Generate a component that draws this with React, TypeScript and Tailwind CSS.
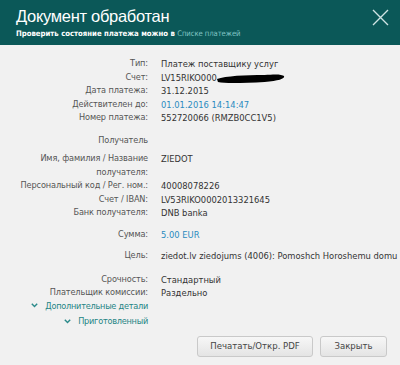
import React from "react";

const Row = ({ label, children, className = "" }: { label: React.ReactNode; children?: React.ReactNode; className?: string }) => (
  <div className={"flex whitespace-nowrap " + className}>
    <div className="w-[148px] shrink-0 text-right text-[#555] text-[9.1px] tracking-[-0.12px]">{label}</div>
    <div className="ml-[13px] text-[#333] text-[9.3px]">{children}</div>
  </div>
);

const Chevron = () => (
  <svg width="7" height="5" viewBox="0 0 7 5" className="inline-block mr-[7px] mb-[1px]">
    <path d="M0.8 0.8 L3.5 3.6 L6.2 0.8" stroke="#2a8a8a" strokeWidth="1.4" fill="none" />
  </svg>
);

export default function App() {
  return (
    <div className="w-[400px] h-[365px] bg-[#f1f1f1] overflow-hidden" style={{ fontFamily: '"DejaVu Sans Condensed", "Liberation Sans", sans-serif' }}>
      <div className="h-[45px] bg-[#0b5858] relative pl-[16px] pt-[5px]">
        <div className="text-white text-[16.5px] leading-[22px] tracking-[-0.3px]" style={{ fontFamily: '"Liberation Sans", sans-serif' }}>Документ обработан</div>
        <div className="text-white text-[7.7px] font-bold leading-[12px] mt-[1px]">
          Проверить состояние платежа можно в <span className="text-[#80c4c4] font-normal tracking-[-0.1px]">Списке платежей</span>
        </div>
        <svg className="absolute right-[11px] top-[9px]" width="17" height="17" viewBox="0 0 17 17">
          <path d="M1 1 L16 16 M16 1 L1 16" stroke="#cfe3e3" strokeWidth="1.4" />
        </svg>
      </div>
      <div className="pt-[12px] leading-[13.5px]">
        <Row label="Тип:">Платеж поставщику услуг</Row>
        <Row label="Счет:">
          <span className="relative">
            LV15RIKO000
            <svg className="absolute left-[55px] top-[1px]" width="70" height="12" viewBox="0 0 72 12">
              <path d="M1 6 C10 3 30 2 50 2 C60 1 68 1 70 3 C71 6 64 8 50 9 C30 10 10 11 2 9 Z" fill="#000" />
            </svg>
          </span>
        </Row>
        <Row label="Дата платежа:">31.12.2015</Row>
        <Row label="Действителен до:"><span className="text-[#2a8bbf]">01.01.2016 14:14:47</span></Row>
        <Row label="Номер платежа:">552720066 (RMZB0CC1V5)</Row>
        <Row label="Получатель" className="mt-[9px]"></Row>
        <Row label={<>Имя, фамилия / Название<br />получателя:</>} className="mt-[5px]">ZIEDOT</Row>
        <Row label="Персональный код / Рег. ном.:">40008078226</Row>
        <Row label="Счет / IBAN:">LV53RIKO0002013321645</Row>
        <Row label="Банк получателя:">DNB banka</Row>
        <Row label="Сумма:" className="mt-[8px]"><span className="text-[#2a8bbf]">5.00 EUR</span></Row>
        <Row label="Цель:" className="mt-[8px]">ziedot.lv ziedojums (4006): Pomoshch Horoshemu domu</Row>
        <Row label="Срочность:" className="mt-[10px]">Стандартный</Row>
        <Row label="Плательщик комиссии:">Раздельно</Row>
        <Row label={<span className="text-[#1f8585] tracking-[-0.25px]"><Chevron />Дополнительные детали</span>} />
        <Row label={<span className="text-[#1f8585] tracking-[-0.25px]"><Chevron />Приготовленный</span>} className="mt-[2px]" />
        <div className="flex justify-end gap-[7px] pr-[13px] mt-[7px]">
          <button className="h-[21px] w-[116px] rounded-[3px] border border-[#c9c9c9] bg-gradient-to-b from-[#f7f7f7] to-[#e4e4e4] text-[9.5px] text-[#444]">Печатать/Откр. PDF</button>
          <button className="h-[21px] w-[67px] rounded-[3px] border border-[#c9c9c9] bg-gradient-to-b from-[#f7f7f7] to-[#e4e4e4] text-[9.5px] text-[#444]">Закрыть</button>
        </div>
      </div>
    </div>
  );
}
